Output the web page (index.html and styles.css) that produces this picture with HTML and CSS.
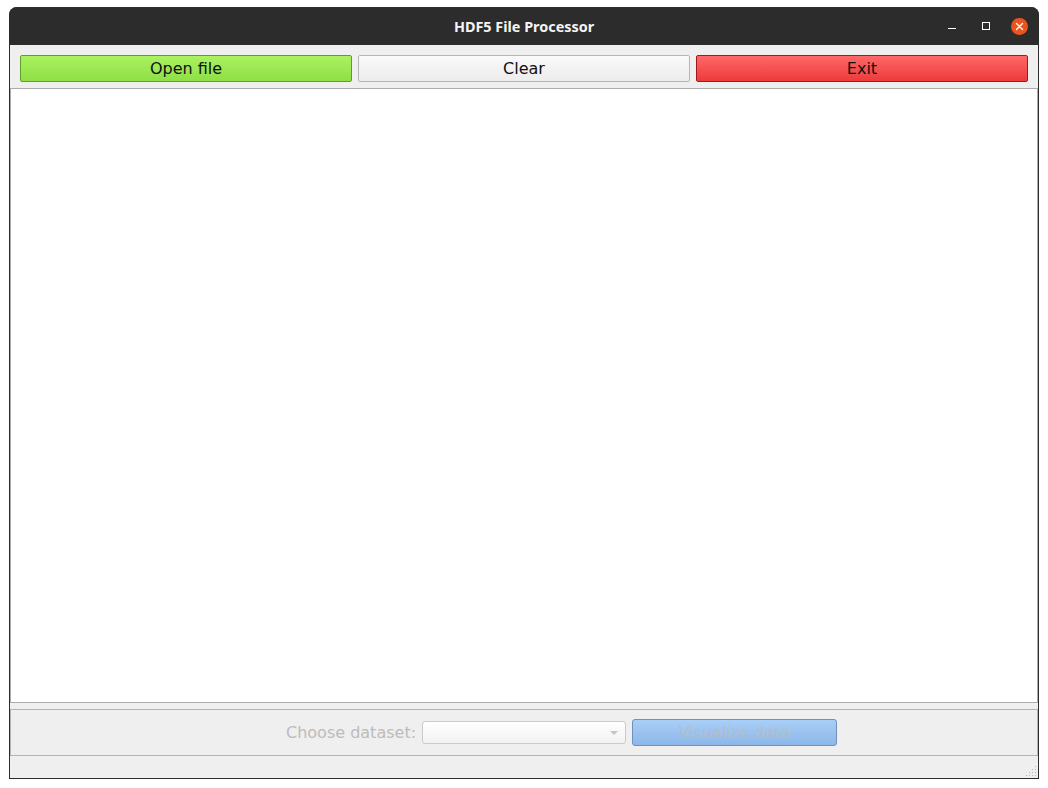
FILE: index.html
```html
<!DOCTYPE html>
<html>
<head>
<meta charset="utf-8">
<title>HDF5 File Processor</title>
<link rel="stylesheet" href="styles.css">
</head>
<body>
<div class="window">
  <div class="titlebar">
    <span class="title">HDF5 File Processor</span>
    <div class="controls">
      <span class="ctl min"></span>
      <span class="ctl max"></span>
      <span class="ctl close">
        <svg width="17" height="17" viewBox="0 0 17 17"><circle cx="8.5" cy="8.5" r="8.5" fill="#e95420"/><path d="M5.5 5.5 L11.5 11.5 M11.5 5.5 L5.5 11.5" stroke="#ffffff" stroke-width="1.3" stroke-linecap="round"/></svg>
      </span>
    </div>
  </div>
  <div class="content">
    <div class="toolbar">
      <button class="btn open">Open file</button>
      <button class="btn clear">Clear</button>
      <button class="btn exit">Exit</button>
    </div>
    <div class="textarea"></div>
    <div class="bottom">
      <span class="label">Choose dataset:</span>
      <div class="combo"><span class="arrow"></span></div>
      <button class="btn visualize" disabled>Visualize data</button>
    </div>
    <div class="status">
      <svg class="grip" width="11" height="11" viewBox="0 0 11 11">
        <g fill="#b8b8b8">
          <rect x="9" y="0" width="1" height="1"/>
          <rect x="6" y="3" width="1" height="1"/><rect x="9" y="3" width="1" height="1"/>
          <rect x="3" y="6" width="1" height="1"/><rect x="6" y="6" width="1" height="1"/><rect x="9" y="6" width="1" height="1"/>
          <rect x="0" y="9" width="1" height="1"/><rect x="3" y="9" width="1" height="1"/><rect x="6" y="9" width="1" height="1"/><rect x="9" y="9" width="1" height="1"/>
        </g>
      </svg>
    </div>
  </div>
</div>
</body>
</html>
```

FILE: styles.css
```css
html, body {
  margin: 0;
  padding: 0;
  background: #ffffff;
  width: 1048px;
  height: 788px;
  overflow: hidden;
}

body {
  font-family: "DejaVu Sans", sans-serif;
}

.window {
  margin: 7px 0 0 9px;
  width: 1030px;
  height: 772px;
  display: flex;
  flex-direction: column;
  border-radius: 8px 8px 0 0;
  overflow: hidden;
  background: #2c2c2c;
}

.titlebar {
  height: 38px;
  flex: none;
  background: #2c2c2c;
  display: flex;
  align-items: center;
  justify-content: center;
  position: relative;
}

.title {
  color: #f4f4f4;
  font-family: "Noto Sans", "DejaVu Sans", sans-serif;
  font-weight: bold;
  font-size: 14.4px;
  margin-top: 1px;
}

.controls {
  position: absolute;
  right: 11px;
  top: 0;
  height: 38px;
  display: flex;
  align-items: center;
}

.ctl {
  display: block;
}

.ctl.min {
  width: 8px;
  height: 1px;
  background: #ffffff;
  margin-top: 5px;
  margin-right: 26px;
}

.ctl.max {
  width: 6px;
  height: 6px;
  border: 1px solid #ffffff;
  margin-right: 21px;
  margin-top: -1px;
}

.ctl.close {
  width: 17px;
  height: 17px;
}

.ctl.close svg {
  display: block;
}

.content {
  flex: 1;
  margin: 0 1px 1px 1px;
  background: #efefef;
  display: flex;
  flex-direction: column;
}

.toolbar {
  display: flex;
  gap: 6px;
  padding: 10px 10px 6px 10px;
}

.btn {
  font-family: "DejaVu Sans", sans-serif;
  font-size: 16px;
  color: #111111;
  height: 27px;
  padding: 0;
  border-radius: 2px;
  cursor: default;
  box-sizing: border-box;
}

.toolbar .btn {
  flex: 1;
  line-height: 25px;
}

.btn.open {
  background: linear-gradient(#a9f260, #8fdf46);
  border: 1px solid #5f9e2c;
}

.btn.clear {
  background: linear-gradient(#fafafa, #ececec);
  border: 1px solid #b5b5b5;
}

.btn.exit {
  background: linear-gradient(#ff6868, #ec3b3b);
  border: 1px solid #a11818;
}

.textarea {
  background: #ffffff;
  border: 1px solid #acacac;
  box-sizing: border-box;
  height: 615px;
}

.bottom {
  margin-top: 6px;
  height: 47px;
  box-sizing: border-box;
  border: 1px solid #b3b3b3;
  display: flex;
  align-items: center;
  padding-left: 275px;
  padding-top: 1px;
}

.label {
  color: #bcbcbc;
  font-size: 16px;
  margin-right: 6px;
  margin-top: -2px;
}

.combo {
  width: 204px;
  height: 23px;
  box-sizing: border-box;
  border: 1px solid #cbcbcb;
  border-radius: 3px;
  background: linear-gradient(#ffffff, #f2f2f2);
  display: flex;
  align-items: center;
  justify-content: flex-end;
  padding-right: 7px;
  margin-right: 6px;
  margin-top: -1px;
}

.arrow {
  width: 0;
  height: 0;
  border-left: 4px solid transparent;
  border-right: 4px solid transparent;
  border-top: 4px solid #c4c4c4;
}

.btn.visualize {
  width: 205px;
  height: 27px;
  background: linear-gradient(#a7cff7, #8db7e8);
  border: 1px solid #6e92be;
  border-radius: 3px;
  color: #b3bdc8;
  line-height: 25px;
  margin-top: -1px;
}

.status {
  flex: 1;
  display: flex;
  justify-content: flex-end;
  align-items: flex-end;
  padding: 0 1px 1px 0;
}

.grip {
  display: block;
}
```
